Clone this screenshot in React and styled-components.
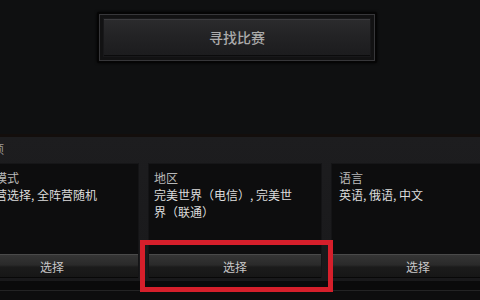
import React from "react";
import styled, { createGlobalStyle } from "styled-components";

const Global = createGlobalStyle`
  html, body { margin: 0; padding: 0; background: #0f1011; }
  body { font-family: "Noto Sans CJK SC", "Noto Sans", sans-serif; }
`;

const Page = styled.div`
  position: relative;
  width: 480px;
  height: 300px;
  overflow: hidden;
  display: flex;
  flex-direction: column;
  background: #0f1011;
`;

const TopArea = styled.div`
  height: 134px;
  flex: none;
  padding: 12px 0 0 97px;
  box-sizing: border-box;
  background: #0f1011;
`;

const FindButton = styled.button`
  width: 280px;
  height: 51px;
  padding: 0;
  border: 2px solid #050505;
  border-radius: 2px;
  background: #18181a;
  box-shadow: inset 0 0 0 1px #37373a, inset 0 0 0 4px #121213, 0 0 3px #000;
  display: flex;
  align-items: center;
  justify-content: center;
  cursor: pointer;
`;

const FindInner = styled.span`
  width: 266px;
  height: 37px;
  display: flex;
  align-items: center;
  justify-content: center;
  background: linear-gradient(#2b2b2d 0%, #232325 45%, #1c1c1e 100%);
  border-top: 1px solid #3c3c3f;
  border-bottom: 1px solid #0b0b0c;
  box-sizing: border-box;
  color: #ababab;
  font-family: "Noto Sans CJK SC", sans-serif;
  font-size: 14px;
  font-weight: 500;
  padding-bottom: 2px;
`;

const Section = styled.div`
  flex: none;
  height: 144px;
  border-top: 3px solid #130e0c;
  background: linear-gradient(#1d1d1f, #19191b);
  display: flex;
  flex-direction: column;
`;

const SectionTitle = styled.div`
  height: 26px;
  flex: none;
  font-size: 11px;
  line-height: 24px;
  color: #9c9c9c;
  margin-left: -40px;
  white-space: nowrap;
`;

const Columns = styled.div`
  display: grid;
  grid-template-columns: repeat(3, 172px);
  column-gap: 11px;
  margin-left: -34px;
  height: 115px;
`;

const Card = styled.div`
  display: flex;
  flex-direction: column;
  background: #0d0d0e;
  border-top: 1px solid #161618;
  box-shadow: -1px 0 0 #141416, 1px 0 0 #141416;
`;

const CardBody = styled.div`
  flex: 1;
  padding: 5px 22px 0 ${(p) => p.$pad}px;
  font-size: 12px;
  line-height: 17px;
`;

const Label = styled.div`
  color: #b9b9b9;
`;

const Value = styled.div`
  color: #dcdcdc;
`;

const SelectButton = styled.button`
  height: 24px;
  width: 100%;
  flex: none;
  padding: 0;
  border: none;
  border-top: 1px solid #4a4a4a;
  border-bottom: 1px solid #080808;
  background: linear-gradient(#353535 0%, #2a2a2a 45%, #1b1b1b 55%, #161616 100%);
  color: #c8c8c8;
  font-family: "Noto Sans CJK SC", sans-serif;
  font-size: 12px;
  cursor: pointer;
`;

const Bottom = styled.div`
  flex: 1;
  background: #0a0a0b;
  display: flex;
  flex-direction: column;
  justify-content: flex-end;
`;

const BottomLine = styled.div`
  height: 9px;
  border-top: 1px solid #232324;
  background: #0d0d0e;
`;

const Highlight = styled.div`
  position: absolute;
  left: 140px;
  top: 240px;
  width: 193px;
  height: 52px;
  box-sizing: border-box;
  border: 5px solid #d61f2b;
  pointer-events: none;
`;

const cards = [
  { label: "游戏模式", value: "全阵营选择, 全阵营随机", pad: 5 },
  { label: "地区", value: "完美世界（电信）, 完美世界（联通）", pad: 5 },
  { label: "语言", value: "英语, 俄语, 中文", pad: 7 },
];

export default function App() {
  return (
    <Page>
      <Global />
      <TopArea>
        <FindButton>
          <FindInner>寻找比赛</FindInner>
        </FindButton>
      </TopArea>
      <Section>
        <SectionTitle>比赛选项</SectionTitle>
        <Columns>
          {cards.map((c) => (
            <Card key={c.label}>
              <CardBody $pad={c.pad}>
                <Label>{c.label}</Label>
                <Value>{c.value}</Value>
              </CardBody>
              <SelectButton>选择</SelectButton>
            </Card>
          ))}
        </Columns>
      </Section>
      <Bottom>
        <BottomLine />
      </Bottom>
      <Highlight />
    </Page>
  );
}
